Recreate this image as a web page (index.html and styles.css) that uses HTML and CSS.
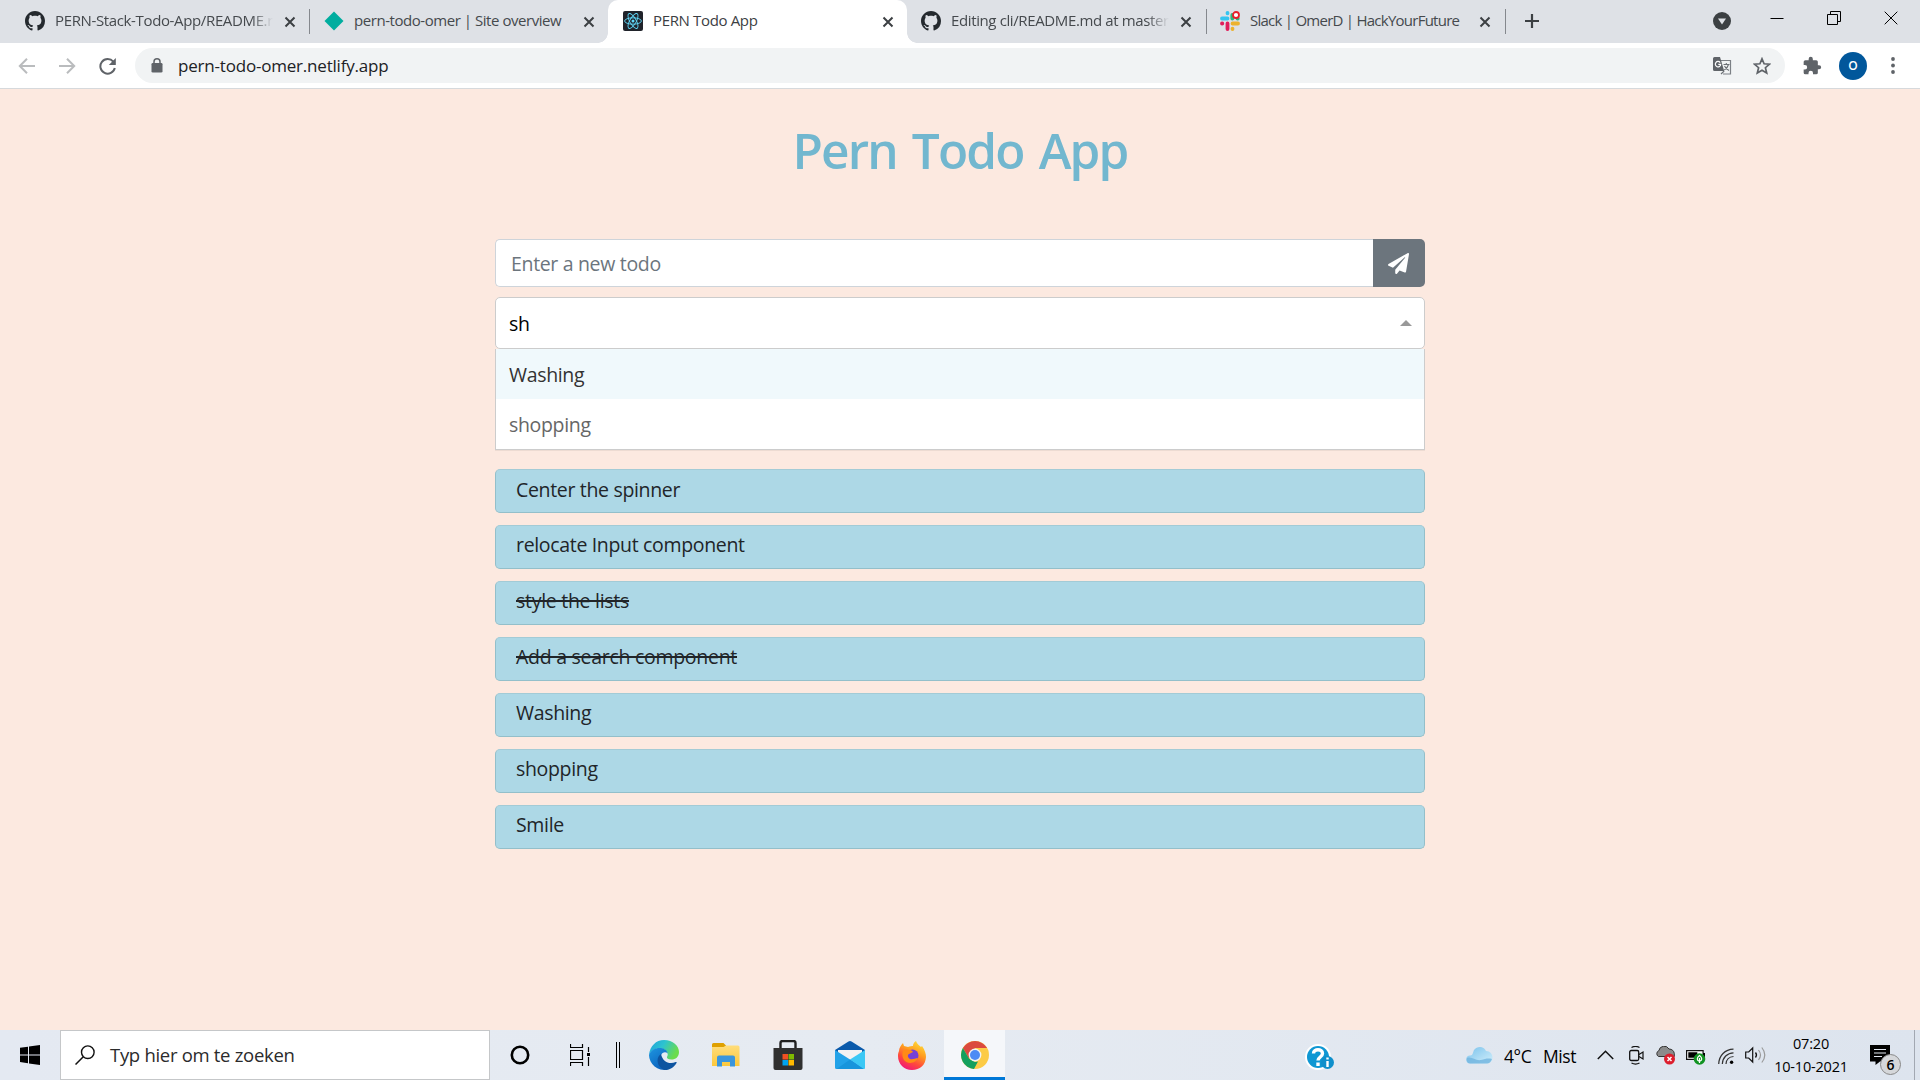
FILE: index.html
```html
<!DOCTYPE html>
<html lang="en">
<head>
<meta charset="utf-8">
<title>PERN Todo App</title>
<link rel="stylesheet" href="styles.css">
</head>
<body>
<svg class="defs" width="0" height="0">
  <symbol id="github" viewBox="0 0 16 16"><path fill="#24292e" d="M8 0C3.58 0 0 3.58 0 8c0 3.54 2.29 6.53 5.47 7.59.4.07.55-.17.55-.38 0-.19-.01-.82-.01-1.49-2.01.37-2.53-.49-2.69-.94-.09-.23-.48-.94-.82-1.13-.28-.15-.68-.52-.01-.53.63-.01 1.08.58 1.23.82.72 1.21 1.87.87 2.33.66.07-.52.28-.87.51-1.07-1.78-.2-3.64-.89-3.64-3.95 0-.87.31-1.59.82-2.15-.08-.2-.36-1.02.08-2.12 0 0 .67-.21 2.2.82.64-.18 1.32-.27 2-.27s1.36.09 2 .27c1.53-1.04 2.2-.82 2.2-.82.44 1.1.16 1.92.08 2.12.51.56.82 1.27.82 2.15 0 3.07-1.87 3.75-3.65 3.95.29.25.54.73.54 1.48 0 1.07-.01 1.93-.01 2.2 0 .21.15.46.55.38A8.01 8.01 0 0 0 16 8c0-4.42-3.58-8-8-8z"/></symbol>
  <symbol id="close" viewBox="0 0 12 12"><path d="M1.500 1.500l9 9m0-9l-9 9" stroke="#3c4043" stroke-width="2" fill="none"/></symbol>
  <linearGradient id="edgeTop" x1="0" y1="0" x2="1" y2=".4"><stop offset="0" stop-color="#1fa0dc"/><stop offset=".5" stop-color="#2dc3cf"/><stop offset="1" stop-color="#6bdc4c"/></linearGradient>
  <linearGradient id="edgeLeft" x1="0" y1="0" x2=".6" y2="1"><stop offset="0" stop-color="#1e96e0"/><stop offset="1" stop-color="#0b62bd"/></linearGradient>
  <linearGradient id="folder" x1="0" y1="0" x2="0" y2="1"><stop offset="0" stop-color="#ffdd7b"/><stop offset="1" stop-color="#fcc83c"/></linearGradient>
  <linearGradient id="fox" x1=".8" y1="0" x2=".3" y2="1"><stop offset="0" stop-color="#ffe13a"/><stop offset=".4" stop-color="#ff9a1f"/><stop offset=".7" stop-color="#ff4a3c"/><stop offset="1" stop-color="#f0147a"/></linearGradient>
  <linearGradient id="cloud" x1="0" y1="0" x2="1" y2="1"><stop offset="0" stop-color="#79c2ec"/><stop offset="1" stop-color="#d3effb"/></linearGradient>
</svg>

<header class="browser">
  <div class="tabs">
    <div class="tab first">
      <svg class="fav" width="20" height="20"><use href="#github"/></svg>
      <span class="label fade t-stack">PERN-Stack-Todo-App/README.r</span>
      <svg class="x" width="12" height="12"><use href="#close"/></svg>
    </div>
    <div class="tab sep">
      <svg class="fav" width="20" height="20" viewBox="0 0 20 20"><path d="M10 .5L19.500 10 10 19.500.5 10z" fill="#00ad9f"/></svg>
      <span class="label t-site">pern-todo-omer | Site overview</span>
      <svg class="x" width="12" height="12"><use href="#close"/></svg>
    </div>
    <div class="tab active">
      <svg class="fav" width="20" height="20" viewBox="0 0 20 20"><rect width="20" height="20" rx="2" fill="#20232a"/><g fill="none" stroke="#61dafb" stroke-width=".9"><ellipse cx="10" cy="10" rx="8.400" ry="3.200"/><ellipse cx="10" cy="10" rx="8.400" ry="3.200" transform="rotate(60 10 10)"/><ellipse cx="10" cy="10" rx="8.400" ry="3.200" transform="rotate(120 10 10)"/></g><circle cx="10" cy="10" r="1.500" fill="#61dafb"/></svg>
      <span class="label t-pern">PERN Todo App</span>
      <svg class="x" width="12" height="12"><use href="#close"/></svg>
    </div>
    <div class="tab after">
      <svg class="fav" width="20" height="20"><use href="#github"/></svg>
      <span class="label fade t-edit">Editing cli/README.md at master</span>
      <svg class="x" width="12" height="12"><use href="#close"/></svg>
    </div>
    <div class="tab sep after">
      <svg class="fav" width="20" height="20" viewBox="0 0 20 20"><g stroke-width="3.800" stroke-linecap="round"><path d="M2 7.500h5.500M7.500 2v.3" stroke="#36c5f0"/><path d="M12.300 4v3.500M17.500 7.500h.3" stroke="#2eb67d"/><path d="M12.500 12.500H18M12.500 17.700v.3" stroke="#ecb22e"/><path d="M7.500 12.500V18M2 12.500h.3" stroke="#e01e5a"/></g><circle cx="16" cy="4" r="3" fill="#fff" stroke="#e8202a" stroke-width="1.800"/></svg>
      <span class="label t-slack">Slack | OmerD | HackYourFuture</span>
      <svg class="x" width="12" height="12"><use href="#close"/></svg>
    </div>
    <div class="newtab"><svg width="16" height="16" viewBox="0 0 16 16"><path d="M8 1v14M1 8h14" stroke="#3c4043" stroke-width="2.200"/></svg></div>
    <div class="window">
      <svg class="search-tabs" width="18" height="18" viewBox="0 0 18 18"><circle cx="9" cy="9" r="9" fill="#3c4043"/><path d="M5 6.500h8L9 12.500z" fill="#dee1e6"/></svg>
      <svg width="14" height="14" viewBox="0 0 14 14"><path d="M.5 7.500h13" stroke="#000"/></svg>
      <svg width="14" height="14" viewBox="0 0 14 14"><path d="M.5 3.500h10v10H.5zM3.500 3.500v-3h10v10h-3" fill="none" stroke="#000"/></svg>
      <svg width="14" height="14" viewBox="0 0 14 14"><path d="M.7.7l12.600 12.600M13.300.7L.7 13.300" stroke="#000"/></svg>
    </div>
  </div>
  <div class="toolbar">
    <svg class="nav" width="18" height="18" viewBox="0 0 18 18"><path d="M17 9H2M9 1.800L1.800 9 9 16.200" fill="none" stroke="#babcbe" stroke-width="2"/></svg>
    <svg class="nav" width="18" height="18" viewBox="0 0 18 18"><path d="M1 9h15M9 1.800L16.200 9 9 16.200" fill="none" stroke="#babcbe" stroke-width="2"/></svg>
    <svg class="nav" width="18" height="18" viewBox="0 0 18 18"><path d="M15.300 4.700A7.300 7.300 0 1 0 16.800 11" fill="none" stroke="#5f6368" stroke-width="2"/><path d="M17.800 1v7H10.800z" fill="#5f6368"/></svg>
    <div class="omnibox">
      <svg class="lock" width="12" height="15" viewBox="0 0 12 15"><rect x=".5" y="5" width="11" height="9.500" rx="1.300" fill="#5f6368"/><path d="M3 6V3.800a3 3 0 0 1 6 0V6" fill="none" stroke="#5f6368" stroke-width="1.500"/></svg>
      <span class="url">pern-todo-omer.netlify.app</span>
      <svg class="translate" width="19" height="18" viewBox="0 0 19 18"><path d="M7 3.500h10.500v13.500H10" fill="none" stroke="#7c8085" stroke-width="1.200"/><path d="M1.500 0H7l4.200 14H1.500A1.500 1.500 0 0 1 0 12.500v-11A1.500 1.500 0 0 1 1.500 0z" fill="#5f6368"/><path d="M7.200 5.600A2.700 2.700 0 1 0 7.700 7.300H5.300" fill="none" stroke="#fff" stroke-width="1.200"/><path d="M10.500 7.500h6M13.300 6v1.500M15.500 7.500c-.6 2.500-2.200 4.200-4.200 5.500M11.500 9c1 2 2.600 3.500 4.500 4.500M8 17l3.200-3" fill="none" stroke="#6c7075" stroke-width="1.100"/></svg>
      <svg width="18" height="18" viewBox="0 0 18 18"><path d="M9 1.800l2.100 5 5.400.4-4.100 3.500 1.300 5.300L9 13.200 4.300 16l1.300-5.300L1.500 7.200l5.400-.4z" fill="none" stroke="#5f6368" stroke-width="1.700"/></svg>
    </div>
    <svg class="puzzle" width="20" height="20" viewBox="0 0 24 24"><path fill="#5f6368" d="M20.500 11H19V7a2 2 0 0 0-2-2h-4V3.500a2.500 2.500 0 0 0-5 0V5H4a2 2 0 0 0-2 2v3.800h1.500a2.700 2.700 0 0 1 0 5.400H2V20a2 2 0 0 0 2 2h3.800v-1.500a2.700 2.700 0 0 1 5.400 0V22H17a2 2 0 0 0 2-2v-4h1.500a2.500 2.500 0 0 0 0-5z"/></svg>
    <span class="avatar">O</span>
    <svg class="dots" width="4" height="17" viewBox="0 0 4 17"><g fill="#5f6368"><circle cx="2" cy="2" r="1.900"/><circle cx="2" cy="8.500" r="1.900"/><circle cx="2" cy="15" r="1.900"/></g></svg>
  </div>
</header>

<main class="app">
  <h1>Pern Todo App</h1>
  <form class="new-todo">
    <div class="field">Enter a new todo</div>
    <div class="send"><svg width="21" height="21" viewBox="0 0 512 512"><path fill="#fff" d="M476 3.200L12.500 270.600c-18.100 10.400-15.800 35.600 2.200 43.200L121 358.400l287.300-253.200c5.500-4.900 13.300 2.600 8.600 8.300L176 407v80.500c0 23.600 28.500 32.900 42.500 15.800L282 426l124.600 52.200c14.200 6 30.400-2.900 33-18.200l72-432C515 7.800 493.300-6.800 476 3.200z"/></svg></div>
  </form>
  <div class="select">sh<i class="arrow"></i></div>
  <div class="options">
    <div class="option focused">Washing</div>
    <div class="option">shopping</div>
  </div>
  <ul class="todos">
    <li>Center the spinner</li>
    <li>relocate Input component</li>
    <li><s>style the lists</s></li>
    <li><s>Add a search component</s></li>
    <li>Washing</li>
    <li>shopping</li>
    <li>Smile</li>
  </ul>
</main>

<footer class="taskbar">
  <div class="start"><svg width="20" height="20" viewBox="0 0 20 20"><path d="M0 2.800L8 1.700v7.700H0zM9 1.500L20 0v9.400H9zM0 10.400h8v7.800L0 17.100zM9 10.400h11V20L9 18.400z"/></svg></div>
  <div class="search"><svg width="20" height="20" viewBox="0 0 20 20"><circle cx="12.800" cy="7.200" r="6.300" fill="none" stroke="#111" stroke-width="1.400"/><path d="M8.300 11.700L.5 19.500" stroke="#111" stroke-width="1.500"/></svg><span>Typ hier om te zoeken</span></div>
  <div class="slot"><svg width="20" height="20" viewBox="0 0 20 20"><circle cx="10" cy="10" r="8.200" fill="none" stroke="#000" stroke-width="2.600"/></svg></div>
  <div class="slot"><svg width="20" height="22" viewBox="0 0 20 22"><path d="M.5 0v3.500h12V0M.5 6.500h12v9H.5zM.5 22v-3.500h12V22M18.500 3v5M18.500 13v9" fill="none" stroke="#000" stroke-width="1.200"/><path d="M17 9h3v3h-3z"/></svg></div>
  <div class="bars"><svg width="4" height="26" viewBox="0 0 4 26"><path d="M.5 0v26M3.500 0v26" stroke="#000"/></svg></div>
  <div class="slot"><svg width="30" height="30" viewBox="0 0 30 30"><path d="M0 15C1 6 7 0 15 0c9 0 15 6 15 12 0 5-3.500 7.500-7.500 7.500-3.500 0-5-1.500-4.500-2.500 2-3 0-7-5-8.500C8 7.500 2 10 0 15z" fill="url(#edgeTop)"/><path d="M0 15C1.500 9.500 7 7.500 12 8c4 .7 6.500 3 6.600 5.500C17 11.500 13 12 12 15.500c-1 4 1.500 9.500 6 14A15 15 0 0 1 0 15z" fill="url(#edgeLeft)"/><path d="M12 14C7 17 7 26 15 29.900c6 .4 10-3 12.500-7 .4-.8 0-1.200-.8-.8C20 25 13.500 21.500 12 14z" fill="#0d54a0"/></svg></div>
  <div class="slot"><svg width="28" height="24" viewBox="0 0 28 24"><path d="M0 1.500A1.500 1.500 0 0 1 1.500 0h10L14 2.500V6H0z" fill="#dfa000"/><path d="M0 4h11.500L14 2.500h12A1.500 1.500 0 0 1 27.500 4v19H0z" fill="url(#folder)"/><path d="M5 23.500v-9a2 2 0 0 1 2-2h14a2 2 0 0 1 2 2v9h-5V19h-8v4.500z" fill="#3b96dc"/></svg></div>
  <div class="slot"><svg width="30" height="30" viewBox="0 0 30 30"><path d="M7.500 9V3a2 2 0 0 1 2-2h11a2 2 0 0 1 2 2v6" fill="none" stroke="#202020" stroke-width="2.400"/><path d="M.5 8h29v20a2 2 0 0 1-2 2h-25a2 2 0 0 1-2-2z" fill="#303030"/><path d="M9.500 14H15v5.500H9.500z" fill="#f25022"/><path d="M15.500 14H21v5.500h-5.500z" fill="#7fba00"/><path d="M9.500 20H15v5.500H9.500z" fill="#00a4ef"/><path d="M15.500 20H21v5.500h-5.500z" fill="#ffb900"/></svg></div>
  <div class="slot"><svg width="30" height="28" viewBox="0 0 30 28"><path d="M0 9L13.500.6q1.500-1 3 0L30 9v3H0z" fill="#0a5aab"/><path d="M3 9h24v10H3z" fill="#f2f2f2"/><path d="M0 9l30 19H1.500A1.500 1.500 0 0 1 0 26.500z" fill="#22a2e8"/><path d="M30 9v17.500a1.500 1.500 0 0 1-1.500 1.500L15 18.500z" fill="#3bc8f5"/><path d="M15 18.500L28.500 28H1.500z" fill="#1795dc"/></svg></div>
  <div class="slot"><svg width="28" height="29" viewBox="0 0 28 29"><path d="M1 10C1 7 3 4 5 2l1 3 4 1c2-1 4-1 5-1 0-2 1-4 3-5 1 3 3 4 5 6l1-1c3 4 4 8 4 11-.5 8-6 13-14 13S0 23 0 15c0-2 .3-3.500 1-5z" fill="url(#fox)"/><circle cx="14.500" cy="14.500" r="6" fill="#7540d8"/><path d="M5 10c4-3 9-1 10 1l-4 2c-2 1-1 4 1 5 3 1 5-1 8-1-2 5-10 7-14 2-2-3-2-6-1-9z" fill="#ff8a16"/></svg></div>
  <div class="slot running"><svg width="28" height="28" viewBox="0 0 28 28"><circle cx="14" cy="14" r="14" fill="#fccb46"/><path d="M1.900 7A14 14 0 0 1 26.100 7H14l-6 10.500z" fill="#db4a3f"/><path d="M1.900 7L8 17.500l6 3.500 3-.5-4 7.500A14 14 0 0 1 1.900 7z" fill="#14a05d"/><circle cx="14" cy="14" r="6.400" fill="#f1f3f4"/><circle cx="14" cy="14" r="5" fill="#4c8bf5"/></svg></div>

  <div class="tray">
    <svg class="help" width="29" height="27" viewBox="0 0 29 27"><circle cx="13" cy="13" r="13" fill="#fff"/><circle cx="13" cy="13" r="11" fill="#0f97d3"/><path d="M8.500 9.500c0-5 9-5 9 0 0 3.500-4.500 3.500-4.500 7M13 18.500v3.500" fill="none" stroke="#fff" stroke-width="3.400"/><circle cx="22.500" cy="18.500" r="6.500" fill="#0f8fcb"/><path d="M22.500 17v6M22.500 13.500v2" stroke="#fff" stroke-width="2.400"/></svg>
    <svg class="mist" width="27" height="17" viewBox="0 0 27 17"><path d="M4 16.500a4 4 0 0 1 .5-8C7 8.500 7 5 8 3c3-4 10-4 12 1 4 0 6.500 3 6.500 6.500 0 3.500-2 6-5.500 6z" fill="url(#cloud)"/><path d="M1 11c5-2 8 3 14 2 4-1 7-2 11-1-1 3-3 4.500-5 4.500H4C1 16.500 0 13 1 11z" fill="#70b4df" opacity=".8"/></svg>
    <span class="temp">4°C</span><span class="cond">Mist</span>
    <svg class="chev" width="17" height="10" viewBox="0 0 17 10"><path d="M.8 9L8.500 1.200 16.200 9" fill="none" stroke="#111" stroke-width="1.500"/></svg>
    <svg class="cam" width="15" height="19" viewBox="0 0 15 19"><path d="M2.500 1.500c2.500-1.300 5.500-1.300 8 0M2.500 17c2.500 1.300 5.500 1.300 8 0" fill="none" stroke="#111" stroke-width="1.200"/><rect x=".7" y="4.500" width="9" height="10" rx="1.500" fill="none" stroke="#111" stroke-width="1.300"/><path d="M10 8.500l4-2.500v7l-4-2.500" fill="none" stroke="#111" stroke-width="1.200"/></svg>
    <svg class="drive" width="20" height="19" viewBox="0 0 20 19"><path d="M3.500 10.500a3.200 3.200 0 0 1 .3-5.800A5.500 5.500 0 0 1 14 3c3 0 5 2 5.300 4.500v3z" fill="#8b8b8b" stroke="#333"/><circle cx="14.500" cy="13" r="5.500" fill="#dc1e2d"/><path d="M12.500 11l4 4m0-4l-4 4" stroke="#fff" stroke-width="1.500"/></svg>
    <svg class="batt" width="20" height="17" viewBox="0 0 20 17"><path d="M.6 2.600h16.500v8.800H.6z" fill="#fff" stroke="#111" stroke-width="1.200"/><path d="M2.300 4.300h9v5.500h-9zM17 5h2v4h-2z"/><circle cx="13.500" cy="11" r="5.800" fill="#119322"/><path d="M13.500 7.500c3 2.500 3 5 0 6-3-1-3-3.500 0-6zM13.500 10v5" fill="none" stroke="#fff" stroke-width="1.200"/></svg>
    <svg class="wifi" width="16" height="17" viewBox="0 0 16 17"><g fill="none" stroke="#333" stroke-width="1.200"><path d="M.7 16C1 7.500 7 1.500 15.500 1.200"/><path d="M4.300 16c.3-6.500 5-11 11.200-11.200"/><path d="M8 16c.2-4.300 3.200-7.300 7.500-7.500"/></g><circle cx="13.600" cy="14.300" r="1.700"/></svg>
    <svg class="vol" width="21" height="18" viewBox="0 0 21 18"><path d="M.7 6h3l4-4v14l-4-4h-3z" fill="none" stroke="#111" stroke-width="1.200"/><path d="M10.500 6.500q2 2.500 0 5" fill="none" stroke="#111" stroke-width="1.300"/><path d="M13.500 4q4 5 0 10M16.800 1.500q6 7.500 0 15" fill="none" stroke="#999" stroke-width="1.200"/></svg>
    <div class="clock"><span>07:20</span><span>10-10-2021</span></div>
    <div class="notify"><svg width="20" height="20" viewBox="0 0 20 20"><path d="M0 0h20v16.500h-10L5.500 20v-3.500H0z"/><path d="M4 4.500h12M4 8h12M4 11.500h8" stroke="#e1e7f0" stroke-width="1.200"/></svg><b>6</b></div>
  </div>
</footer>
</body>
</html>
```
FILE: styles.css
```css
* { box-sizing: border-box; }
body {
  margin: 0; height: 1080px; overflow: hidden;
  display: flex; flex-direction: column;
  background: #fce9e0; color: #212529;
  font-family: "Open Sans", "Noto Sans", sans-serif;
}
svg { display: block; flex: none; }
.defs { position: absolute; }

/* Browser chrome */
.browser { height: 89px; flex: none; background: #fff; border-bottom: 1px solid #d6d9dc; }
.tabs { display: flex; height: 43px; background: #dee1e6; }
.tab {
  position: relative; display: flex; align-items: center;
  width: 299px; height: 43px; padding: 0 13px 2px 15px;
  color: #45494d; font-size: 15px; white-space: nowrap;
}
.tab.first { width: 309px; padding-left: 25px; }
.tab.after { padding: 0 14px 2px 14px; }
.tab.sep::before, .newtab::before {
  content: ""; position: absolute; left: 0; top: 9px;
  width: 1px; height: 25px; background: #85888d;
}
.tab .label { flex: 1; min-width: 0; margin-left: 10px; overflow: hidden; line-height: 22px; padding-bottom: 2px; }
.tab .fade { -webkit-mask: linear-gradient(to right, #000 90%, transparent); mask: linear-gradient(to right, #000 90%, transparent); }
.tab .x { margin-left: 11px; position: relative; top: 1px; }
.tab.active { background: #fff; border-radius: 10px 10px 0 0; color: #3c4043; }
.tab.active::before, .tab.active::after {
  content: ""; position: absolute; bottom: 0; width: 10px; height: 10px;
}
.tab.active::before { right: 100%; background: radial-gradient(circle at 0 0, transparent 9.5px, #fff 10px); }
.tab.active::after { left: 100%; background: radial-gradient(circle at 100% 0, transparent 9.5px, #fff 10px); }
.tab .t-stack { letter-spacing: -.36px; }
.tab .t-site { letter-spacing: -.45px; }
.tab .t-pern { letter-spacing: -.35px; }
.tab .t-edit { letter-spacing: -.38px; }
.tab .t-slack { letter-spacing: -.75px; }
.newtab { position: relative; display: flex; align-items: center; padding: 0 0 1px 19px; }
.window { display: flex; flex: 1; justify-content: flex-end; align-items: center; gap: 43px; padding: 0 22px 7px 0; }
.search-tabs { margin-right: -4px; position: relative; top: 3px; }

.toolbar { display: flex; align-items: center; height: 45px; padding-left: 18px; }
.nav { margin-right: 22px; }
.nav:nth-child(3) { margin-right: 19px; }
.omnibox {
  display: flex; align-items: center; width: 1650px; height: 35px;
  padding: 0 14px 0 16px; border-radius: 18px; background: #f1f3f4;
}
.url { flex: 1; margin-left: 15px; font-size: 17px; letter-spacing: -.2px; color: #202124; }
.translate { margin-right: 21px; }
.puzzle { margin-left: 17px; }
.avatar {
  display: flex; align-items: center; justify-content: center;
  width: 28px; height: 28px; margin: 0 24px 0 17px;
  border-radius: 50%; background: #01579b; color: #fff; font-size: 12px; font-weight: 600;
}

/* Todo app */
.app { flex: 1; width: 930px; margin: 0 auto; padding-top: 31px; font-size: 19.5px; letter-spacing: -.33px; }
h1 {
  margin: 0 0 59px; text-align: center; color: #72b7cf;
  font-size: 49.500px; font-weight: 600; line-height: 60px; letter-spacing: -1.850px; word-spacing: 4px;
}
.new-todo { display: flex; height: 48px; margin: 0 0 10px; }
.field {
  flex: 1; padding-left: 15px; border: 1px solid #ced4da; border-right: 0;
  border-radius: 5px 0 0 5px; background: #fff; color: #6c757d; line-height: 48px;
}
.send {
  display: flex; align-items: center; justify-content: center;
  width: 52px; padding-right: 1px; border-radius: 0 5px 5px 0; background: #6c757d;
}
.select {
  display: flex; align-items: center; justify-content: space-between;
  height: 52px; padding: 0 12px 0 13px; border: 1px solid #ccc;
  border-radius: 5px; background: #fff; color: #000;
}
.arrow { border: 6px solid transparent; border-top: 0; border-bottom-color: #999; }
.options { border: 1px solid #ccc; border-top: 0; background: #fff; box-shadow: 0 1px 0 rgba(0,0,0,.06); }
.option { height: 50px; padding-left: 13px; line-height: 52px; color: #666; }
.option.focused { background: #f0f9fc; color: #333; }
.todos { display: grid; gap: 12px; margin: 19px 0 0; padding: 0; list-style: none; }
.todos li {
  height: 44px; padding-left: 20px; line-height: 38px;
  border: 1px solid #93bfca; border-top-color: #a3cbd6; border-radius: 5px; background: #add8e6;
}
.todos li:first-child { line-height: 40px; }
.todos s { text-decoration-thickness: 2px; letter-spacing: -.28px; }

/* Taskbar */
.taskbar { display: flex; flex: none; height: 50px; background: linear-gradient(90deg, #e4e9f2, #e6ebf2 45%, #dde4ee); color: #000; }
.start { display: flex; align-items: center; width: 60px; padding-left: 20px; }
.search {
  display: flex; align-items: center; gap: 15px; width: 430px;
  padding-left: 14px; border: 1px solid #c5c7c9; background: #fff;
  font-size: 18.5px; letter-spacing: -.3px; color: #2b2b2b;
}
.search span { padding-bottom: 2px; }
.slot { display: flex; align-items: center; justify-content: center; width: 62px; }
.search + .slot, .search + .slot + .slot { width: 60px; }
.bars { display: flex; align-items: center; width: 23px; padding-left: 6px; }
.running { margin-left: 1px; width: 61px; border-bottom: 3px solid #0078d7; background: #f5f7fa; padding-top: 3px; }
.tray { display: flex; align-items: center; flex: 1; margin-right: 5px; border-right: 1px solid #a2a8b2; padding-left: 300px; }
.help { margin: 4px 132px 0 0; }
.temp, .cond { font-size: 17.5px; letter-spacing: -.4px; line-height: 24px; padding-top: 2px; }
.mist { margin-right: 11px; }
.temp { width: 39px; }
.cond { width: 54px; }
.chev { margin-right: 15px; }
.cam { margin-right: 11px; }
.drive { margin: 0 11px 0 0; }
.batt { margin: 3px 12px 0 0; }
.wifi { margin: 2px 11px 0 0; }
.clock {
  display: flex; flex-direction: column; align-items: center; width: 92px; margin-left: -1px;
  font-size: 14.5px; line-height: 23px; letter-spacing: -.2px;
}
.notify { position: relative; margin-left: 13px; }
.notify b {
  position: absolute; left: 10px; top: 9px; width: 21px; height: 21px;
  border: 1px solid #888; border-radius: 50%; background: #d5d7da;
  font-size: 14px; font-weight: 600; line-height: 19px; text-align: center;
}
```
